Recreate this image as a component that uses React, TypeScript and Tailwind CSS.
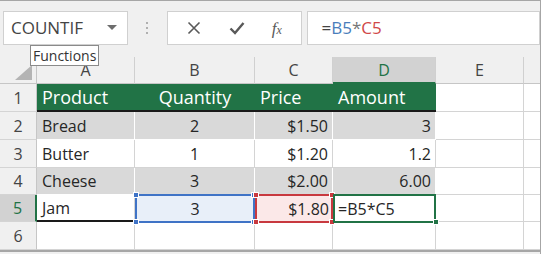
import React from "react";

type Cell = {
  text?: string;
  align?: "left" | "right" | "center";
  kind?: "head" | "band" | "plain";
};

const cols = ["A", "B", "C", "D", "E"];

const rows: Cell[][] = [
  [
    { text: "Product", kind: "head" },
    { text: "Quantity", kind: "head", align: "center" },
    { text: "Price", kind: "head" },
    { text: "Amount", kind: "head" },
  ],
  [
    { text: "Bread", kind: "band" },
    { text: "2", kind: "band", align: "center" },
    { text: "$1.50", kind: "band", align: "right" },
    { text: "3", kind: "band", align: "right" },
  ],
  [
    { text: "Butter" },
    { text: "1", align: "center" },
    { text: "$1.20", align: "right" },
    { text: "1.2", align: "right" },
  ],
  [
    { text: "Cheese", kind: "band" },
    { text: "3", kind: "band", align: "center" },
    { text: "$2.00", kind: "band", align: "right" },
    { text: "6.00", kind: "band", align: "right" },
  ],
];

const rowHeights = ["h-[28px]", "h-[28px]", "h-[28px]", "h-[27px]", "h-[27px]", "h-[28px]"];

function Handle({ pos, color }: { pos: string; color: string }) {
  return <span className={`absolute w-[6px] h-[6px] border border-white ${pos} ${color}`} />;
}

function DataCell({ cell, h }: { cell: Cell; h: string }) {
  const kind = cell.kind ?? "plain";
  const bg =
    kind === "head"
      ? "bg-[#217346] text-white text-[18px] border-b-2 border-b-[#1a1a1a]"
      : kind === "band"
        ? "bg-[#d9d9d9] text-[#262626] border-r border-r-white border-b border-b-white"
        : "bg-white text-[#262626] border-r border-r-[#d4d4d4] border-b border-b-[#d4d4d4]";
  const align =
    cell.align === "right" ? "justify-end pr-[4px]" : cell.align === "center" ? "justify-center" : "justify-start pl-[5px]";
  return (
    <div className={`${h} ${bg} ${align} flex items-center text-[16px] leading-none`}>
      <span className={kind === "head" ? "text-[18px]" : ""}>{cell.text}</span>
    </div>
  );
}

function Blank({ h }: { h: string }) {
  return <div className={`${h} bg-white border-r border-b border-[#d4d4d4]`} />;
}

function RowHeader({ n, h, active }: { n: number; h: string; active?: boolean }) {
  return (
    <div
      className={`${h} flex items-center justify-center text-[16px] border-b border-[#d4d4d4] ${
        active ? "bg-[#d2d2d2] text-[#217346] border-r-2 border-r-[#217346]" : "bg-[#f0f0f0] text-[#444] border-r border-r-[#c6c6c6]"
      }`}
    >
      {n}
    </div>
  );
}

export default function App() {
  return (
    <div className="w-[543px] h-[254px] bg-white overflow-hidden font-['Open_Sans',sans-serif]">
      <div className="relative w-[541px] h-[254px] bg-[#f0f0f0] border-t border-r border-[#a6a6a6]">
        {/* formula bar */}
        <div className="flex items-start h-[56px] pt-[10px] pl-[3px]">
          <div className="w-[125px] h-[34px] bg-white border border-[#d0d0d0] flex items-center pl-[7px] pr-[10px]">
            <span className="text-[17px] text-[#444] flex-1">COUNTIF</span>
            <svg width="10" height="6" viewBox="0 0 10 6">
              <path d="M0 0h10L5 5z" fill="#6d6d6d" />
            </svg>
          </div>
          <div className="w-[39px] h-[34px] flex flex-col items-center justify-center gap-[3px]">
            <span className="w-[2px] h-[2px] bg-[#b0b0b0]" />
            <span className="w-[2px] h-[2px] bg-[#b0b0b0]" />
            <span className="w-[2px] h-[2px] bg-[#b0b0b0]" />
          </div>
          <div className="w-[136px] h-[34px] bg-white border border-[#d0d0d0] flex items-center justify-around px-[6px]">
            <svg width="14" height="14" viewBox="0 0 14 14">
              <path d="M1.5 1.5l11 11M12.5 1.5l-11 11" stroke="#595959" strokeWidth="1.6" />
            </svg>
            <svg width="16" height="14" viewBox="0 0 16 14">
              <path d="M1.5 7.5l4.5 4.5 8.5-10" stroke="#595959" strokeWidth="2.4" fill="none" />
            </svg>
            <span className="font-['Liberation_Serif',serif] italic text-[17px] text-[#595959] leading-none">
              f<span className="text-[12px]">x</span>
            </span>
          </div>
          <div className="w-[233px] h-[34px] ml-[5px] bg-white border border-[#d0d0d0] flex items-center pl-[13px]">
            <span className="text-[17px] text-[#444]">
              =<span className="text-[#4a7ebb]">B5</span>
              <span className="text-[#777]">*</span>
              <span className="text-[#d04848]">C5</span>
            </span>
          </div>
        </div>

        {/* sheet */}
        <div className="grid grid-cols-[37px_98px_120px_78px_103px_88px_1fr]">
          {/* column header row */}
          <div className="h-[27px] bg-[#f0f0f0] border-r border-b border-[#c6c6c6] relative">
            <svg className="absolute right-[4px] bottom-[3px]" width="17" height="15" viewBox="0 0 17 15">
              <path d="M17 0v15H0z" fill="#b4b4b4" />
            </svg>
          </div>
          {cols.map((c) => (
            <div
              key={c}
              className={`h-[27px] flex items-center justify-center text-[16px] border-r border-r-[#d0d0d0] ${
                c === "D"
                  ? "bg-[#d2d2d2] text-[#217346] border-b-2 border-b-[#217346]"
                  : "bg-[#f0f0f0] text-[#444] border-b border-b-[#c6c6c6]"
              }`}
            >
              {c}
            </div>
          ))}
          <div className="h-[27px] bg-[#f0f0f0] border-b border-[#c6c6c6]" />

          {rows.map((r, i) => (
            <React.Fragment key={i}>
              <RowHeader n={i + 1} h={rowHeights[i]} />
              {r.map((cell, j) => (
                <DataCell key={j} cell={cell} h={rowHeights[i]} />
              ))}
              <Blank h={rowHeights[i]} />
              <div className={`${rowHeights[i]} bg-white border-b border-[#d4d4d4]`} />
            </React.Fragment>
          ))}

          {/* row 5 */}
          <RowHeader n={5} h={rowHeights[4]} active />
          <div className="h-[27px] bg-white text-[#262626] border-r border-[#d4d4d4] border-b-2 border-b-[#1a1a1a] flex items-center pl-[5px] text-[16px]">
            Jam
          </div>
          <div className="h-[27px] relative bg-[#e8eff9] text-[#262626] flex items-center justify-center text-[16px]">
            3
            <span className="absolute inset-x-0 -top-px -bottom-px border-2 border-[#3f73c6]" />
            <Handle pos="-left-[2px] -top-[3px]" color="bg-[#3f73c6]" />
            <Handle pos="-right-[2px] -top-[3px]" color="bg-[#3f73c6]" />
            <Handle pos="-left-[2px] -bottom-[3px]" color="bg-[#3f73c6]" />
            <Handle pos="-right-[2px] -bottom-[3px]" color="bg-[#3f73c6]" />
          </div>
          <div className="h-[27px] relative bg-[#fbe8e8] text-[#262626] flex items-center justify-end pr-[4px] text-[16px]">
            $1.80
            <span className="absolute inset-x-0 -top-px -bottom-px border-2 border-[#c8393f]" />
            <Handle pos="-left-[2px] -top-[3px]" color="bg-[#c8393f]" />
            <Handle pos="-right-[2px] -top-[3px]" color="bg-[#c8393f]" />
            <Handle pos="-left-[2px] -bottom-[3px]" color="bg-[#c8393f]" />
            <Handle pos="-right-[2px] -bottom-[3px]" color="bg-[#c8393f]" />
          </div>
          <div className="h-[27px] relative bg-white text-[#262626] flex items-center pl-[5px] text-[16px]">
            =B5*C5
            <span className="absolute inset-x-0 -top-px -bottom-px border-2 border-[#217346]" />
            <Handle pos="-right-[3px] -bottom-[3px]" color="bg-[#217346]" />
          </div>
          <Blank h="h-[27px]" />
          <div className="h-[27px] bg-white border-b border-[#d4d4d4]" />

          {/* row 6 */}
          <RowHeader n={6} h={rowHeights[5]} />
          <Blank h="h-[28px]" />
          <Blank h="h-[28px]" />
          <Blank h="h-[28px]" />
          <Blank h="h-[28px]" />
          <Blank h="h-[28px]" />
          <div className="h-[28px] bg-white border-b border-[#d4d4d4]" />
        </div>
        <div className="h-[2px] bg-[#a6a6a6]" />

        {/* tooltip */}
        <div className="absolute left-[30px] top-[44px] h-[21px] px-[2px] bg-white border border-[#8a8a8a] text-[14px] text-[#333] leading-[19px]">
          Functions
        </div>
      </div>
    </div>
  );
}
